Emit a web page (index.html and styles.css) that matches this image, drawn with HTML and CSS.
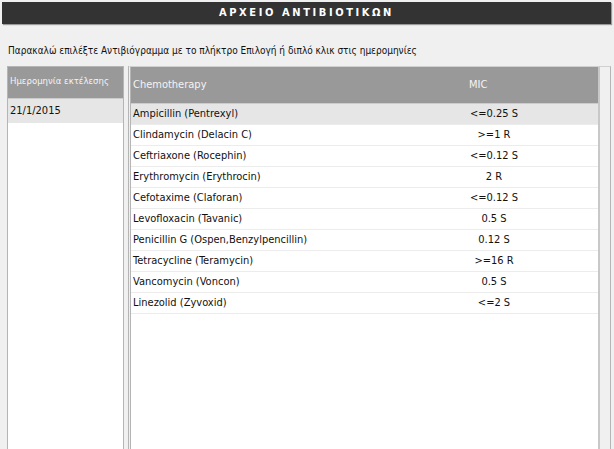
FILE: index.html
```html
<!DOCTYPE html>
<html lang="el">
<head>
    <meta charset="UTF-8" />
    <title>Αρχείο Αντιβιοτικών</title>
    <link rel="stylesheet" href="styles.css">
</head>
<body>
    <div class="titlebar">ΑΡΧΕΙΟ ΑΝΤΙΒΙΟΤΙΚΩΝ</div>
    <p class="hint">Παρακαλώ επιλέξτε Αντιβιόγραμμα με το πλήκτρο Επιλογή ή διπλό κλικ στις ημερομηνίες</p>

    <div class="panels">
        <!-- dates list -->
        <div class="dates">
            <div class="dates-head">Ημερομηνία εκτέλεσης</div>
            <div class="date-row selected">21/1/2015</div>
        </div>

        <!-- antibiotics grid -->
        <div class="results">
            <div class="grid">
                <div class="grid-head">
                    <span class="col-name">Chemotherapy</span>
                    <span class="col-mic">MIC</span>
                </div>
                <div class="row selected"><span class="col-name">Ampicillin (Pentrexyl)</span><span class="col-mic">&lt;=0.25 S</span></div>
                <div class="row"><span class="col-name">Clindamycin (Delacin C)</span><span class="col-mic">&gt;=1 R</span></div>
                <div class="row"><span class="col-name">Ceftriaxone (Rocephin)</span><span class="col-mic">&lt;=0.12 S</span></div>
                <div class="row"><span class="col-name">Erythromycin (Erythrocin)</span><span class="col-mic">2 R</span></div>
                <div class="row"><span class="col-name">Cefotaxime (Claforan)</span><span class="col-mic">&lt;=0.12 S</span></div>
                <div class="row"><span class="col-name">Levofloxacin (Tavanic)</span><span class="col-mic">0.5 S</span></div>
                <div class="row"><span class="col-name">Penicillin G (Ospen,Benzylpencillin)</span><span class="col-mic">0.12 S</span></div>
                <div class="row"><span class="col-name">Tetracycline (Teramycin)</span><span class="col-mic">&gt;=16 R</span></div>
                <div class="row"><span class="col-name">Vancomycin (Voncon)</span><span class="col-mic">0.5 S</span></div>
                <div class="row"><span class="col-name">Linezolid (Zyvoxid)</span><span class="col-mic">&lt;=2 S</span></div>
            </div>
            <div class="scroll-strip"></div>
        </div>
    </div>
</body>
</html>
```

FILE: styles.css
```css
/* Page base */
body {
    margin: 0;
    height: 449px;
    overflow: hidden;
    background-color: #f0f0f0;
    font-family: "DejaVu Sans Condensed", "DejaVu Sans", sans-serif;
    font-size: 11px;
    color: #111;
    display: flex;
    flex-direction: column;
}

/* Dark title bar */
.titlebar {
    margin: 2px 3px 0 2px;
    height: 22px;
    line-height: 22px;
    background-color: #333;
    color: #fff;
    font-weight: bold;
    font-size: 11px;
    letter-spacing: 2.6px;
    text-align: center;
    box-shadow: 1px 1px 1px #999;
}

.hint {
    margin: 18px 0 0 8px;
    height: 18px;
    line-height: 18px;
    font-size: 10px;
}

/* Two side-by-side panels */
.panels {
    flex: 1;
    display: flex;
    gap: 4px;
    margin: 6px 3px 0 7px;
    min-height: 0;
}

.dates {
    width: 115px;
    background-color: #fff;
    border: 1px solid #b5b5b5;
    border-bottom: none;
}

.dates-head {
    height: 31px;
    line-height: 28px;
    padding-left: 2px;
    background-color: #999;
    color: #f4f4f4;
    font-size: 9.5px;
    border-bottom: 1px solid #ccc;
}

.date-row {
    height: 24px;
    line-height: 24px;
    padding-left: 2px;
}

.selected {
    background-color: #e6e6e6;
}

.results {
    flex: 1;
    display: flex;
    border-left: 3px double #b5b5b5;
    border-right: 1px solid #b5b5b5;
    border-top: 1px solid #d0d0d0;
}

.grid {
    flex: 1;
    background-color: #fff;
    border-right: 2px solid #c8c8c8;
}

.grid-head {
    display: flex;
    height: 36px;
    line-height: 36px;
    background-color: #999;
    color: #f4f4f4;
    font-size: 11px;
    border-bottom: 1px solid #ccc;
}

.row {
    display: flex;
    height: 20px;
    line-height: 20px;
    border-bottom: 1px solid #ececec;
}

.col-name {
    width: 294px;
    padding-left: 2px;
}

.col-mic {
    width: 134px;
    text-align: center;
}

.grid-head .col-mic {
    text-align: left;
    padding-left: 42px;
    width: 92px;
}

.scroll-strip {
    width: 10px;
    background-color: #f0f0f0;
}
```
